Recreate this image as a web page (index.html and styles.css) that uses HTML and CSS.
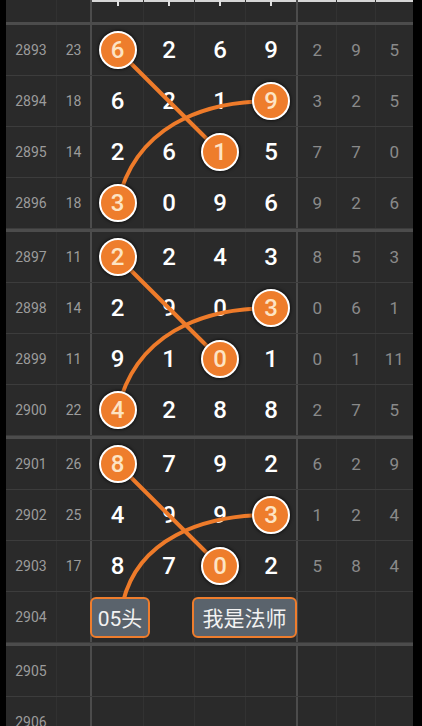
FILE: index.html
```html
<!DOCTYPE html>
<html>
<head>
    <title>走势图</title>
    <link rel="stylesheet" href="styles.css">
</head>
<body>
    <div class="board">
        <div class="row top">
            <div class="per"></div>
            <div class="sum"></div>
            <div class="dig">
                <span class="c"><i class="tick"></i></span>
                <span class="c"><i class="tick"></i></span>
                <span class="c"><i class="tick"></i></span>
                <span class="c"><i class="tick"></i></span>
            </div>
            <div class="rest"><span></span><span></span><span></span></div>
        </div>

        <div class="group">
            <div class="row">
                <div class="per">2893</div><div class="sum">23</div>
                <div class="dig"><span class="c"><b class="hit">6</b></span><span class="c">2</span><span class="c">6</span><span class="c">9</span></div>
                <div class="rest"><span>2</span><span>9</span><span>5</span></div>
            </div>
            <div class="row">
                <div class="per">2894</div><div class="sum">18</div>
                <div class="dig"><span class="c">6</span><span class="c">2</span><span class="c">1</span><span class="c"><b class="hit">9</b></span></div>
                <div class="rest"><span>3</span><span>2</span><span>5</span></div>
            </div>
            <div class="row">
                <div class="per">2895</div><div class="sum">14</div>
                <div class="dig"><span class="c">2</span><span class="c">6</span><span class="c"><b class="hit">1</b></span><span class="c">5</span></div>
                <div class="rest"><span>7</span><span>7</span><span>0</span></div>
            </div>
            <div class="row">
                <div class="per">2896</div><div class="sum">18</div>
                <div class="dig"><span class="c"><b class="hit">3</b></span><span class="c">0</span><span class="c">9</span><span class="c">6</span></div>
                <div class="rest"><span>9</span><span>2</span><span>6</span></div>
            </div>
        </div>

        <div class="group">
            <div class="row">
                <div class="per">2897</div><div class="sum">11</div>
                <div class="dig"><span class="c"><b class="hit">2</b></span><span class="c">2</span><span class="c">4</span><span class="c">3</span></div>
                <div class="rest"><span>8</span><span>5</span><span>3</span></div>
            </div>
            <div class="row">
                <div class="per">2898</div><div class="sum">14</div>
                <div class="dig"><span class="c">2</span><span class="c">9</span><span class="c">0</span><span class="c"><b class="hit">3</b></span></div>
                <div class="rest"><span>0</span><span>6</span><span>1</span></div>
            </div>
            <div class="row">
                <div class="per">2899</div><div class="sum">11</div>
                <div class="dig"><span class="c">9</span><span class="c">1</span><span class="c"><b class="hit">0</b></span><span class="c">1</span></div>
                <div class="rest"><span>0</span><span>1</span><span>11</span></div>
            </div>
            <div class="row">
                <div class="per">2900</div><div class="sum">22</div>
                <div class="dig"><span class="c"><b class="hit">4</b></span><span class="c">2</span><span class="c">8</span><span class="c">8</span></div>
                <div class="rest"><span>2</span><span>7</span><span>5</span></div>
            </div>
        </div>

        <div class="group">
            <div class="row">
                <div class="per">2901</div><div class="sum">26</div>
                <div class="dig"><span class="c"><b class="hit">8</b></span><span class="c">7</span><span class="c">9</span><span class="c">2</span></div>
                <div class="rest"><span>6</span><span>2</span><span>9</span></div>
            </div>
            <div class="row">
                <div class="per">2902</div><div class="sum">25</div>
                <div class="dig"><span class="c">4</span><span class="c">9</span><span class="c">9</span><span class="c"><b class="hit">3</b></span></div>
                <div class="rest"><span>1</span><span>2</span><span>4</span></div>
            </div>
            <div class="row">
                <div class="per">2903</div><div class="sum">17</div>
                <div class="dig"><span class="c">8</span><span class="c">7</span><span class="c"><b class="hit">0</b></span><span class="c">2</span></div>
                <div class="rest"><span>5</span><span>8</span><span>4</span></div>
            </div>
            <div class="row">
                <div class="per">2904</div><div class="sum"></div>
                <div class="dig">
                    <span class="c left"><em class="tag">05头</em></span>
                    <span class="c"></span>
                    <span class="c left wide"><em class="tag">我是法师</em></span>
                </div>
                <div class="rest"><span></span><span></span><span></span></div>
            </div>
        </div>

        <div class="group">
            <div class="row">
                <div class="per">2905</div><div class="sum"></div>
                <div class="dig"><span class="c"></span><span class="c"></span><span class="c"></span><span class="c"></span></div>
                <div class="rest"><span></span><span></span><span></span></div>
            </div>
            <div class="row">
                <div class="per">2906</div><div class="sum"></div>
                <div class="dig"><span class="c"></span><span class="c"></span><span class="c"></span><span class="c"></span></div>
                <div class="rest"><span></span><span></span><span></span></div>
            </div>
        </div>
    </div>

    <!-- connecting lines, drawn under the circles -->
    <svg class="links" width="422" height="726" viewBox="0 0 422 726">
        <path d="M117.5 50 L220 152" />
        <path d="M271 101 C 200 101 135 128 117.5 203" />
        <path d="M117.5 257 L220 359" />
        <path d="M271 308 C 200 308 135 335 117.5 410" />
        <path d="M117.5 464 L220 566" />
        <path d="M271 515 C 200 515 138 540 123 602" />
    </svg>
</body>
</html>
```

FILE: styles.css
```css
body {
    margin: 0;
    background: #000;
    font-family: Roboto, "Noto Sans CJK SC", sans-serif;
    position: relative;
    height: 726px;
    overflow: hidden;
}
.board {
    margin-left: 6px;
    width: 407px;
    background: #2a2a2a;
}
.row {
    display: flex;
    height: 51px;
    box-sizing: border-box;
    border-bottom: 1px solid #3c3c3c;
}
.top {
    height: 22px;
    border-bottom: none;
}
.group {
    border-top: 3px solid #4c4c4c;
}
.per, .sum {
    display: flex;
    align-items: center;
    justify-content: center;
    box-sizing: border-box;
    font-size: 14px;
    color: #9c9c9c;
}
.per {
    width: 51px;
    border-right: 1px solid #313131;
}
.sum {
    width: 33px;
}
.dig {
    width: 206px;
    box-sizing: border-box;
    border-left: 2px solid #4c4c4c;
    display: grid;
    grid-template-columns: repeat(4, minmax(0, 1fr));
}
.c {
    display: flex;
    align-items: center;
    justify-content: center;
    box-sizing: border-box;
    border-left: 1px solid #323232;
    font-size: 24px;
    font-weight: 500;
    color: #fff;
}
.c:first-child {
    border-left: none;
}
.rest {
    width: 117px;
    box-sizing: border-box;
    border-left: 2px solid #4c4c4c;
    display: grid;
    grid-template-columns: repeat(3, minmax(0, 1fr));
}
.rest span {
    display: flex;
    align-items: center;
    justify-content: center;
    box-sizing: border-box;
    border-left: 1px solid #323232;
    font-size: 17px;
    color: #8a8a8a;
}
.rest span:first-child {
    border-left: none;
}
.top .dig, .top .rest {
    box-shadow: inset 0 2px 0 #d6d6d6;
}
.top .c {
    align-items: flex-start;
}
.tick {
    width: 2px;
    height: 6px;
    background: #e0e0e0;
}
.hit {
    position: relative;
    z-index: 2;
    flex: none;
    width: 38px;
    height: 38px;
    box-sizing: border-box;
    border: 2px solid #fff;
    border-radius: 50%;
    background: #ee7d2c;
    color: #fde4c4;
    font-weight: 500;
    display: flex;
    align-items: center;
    justify-content: center;
    box-shadow: 0 0 3px 1px rgba(0, 0, 0, 0.55);
}
.left {
    justify-content: flex-start;
}
.wide {
    grid-column: span 2;
}
.tag {
    position: relative;
    z-index: 2;
    flex: none;
    margin-left: -2px;
    height: 41px;
    box-sizing: border-box;
    border: 2px solid #ee7d2d;
    border-radius: 6px;
    background: #5a636c;
    color: #f2f2f2;
    font-style: normal;
    font-weight: normal;
    font-size: 21px;
    display: flex;
    align-items: center;
    justify-content: center;
}
.left:first-child .tag {
    width: 60px;
}
.wide .tag {
    margin-left: -3px;
    width: 105px;
}
.links {
    position: absolute;
    left: 0;
    top: 0;
    z-index: 1;
    pointer-events: none;
}
.links path {
    fill: none;
    stroke: #ee7b2a;
    stroke-width: 4;
    stroke-linecap: round;
}
```
